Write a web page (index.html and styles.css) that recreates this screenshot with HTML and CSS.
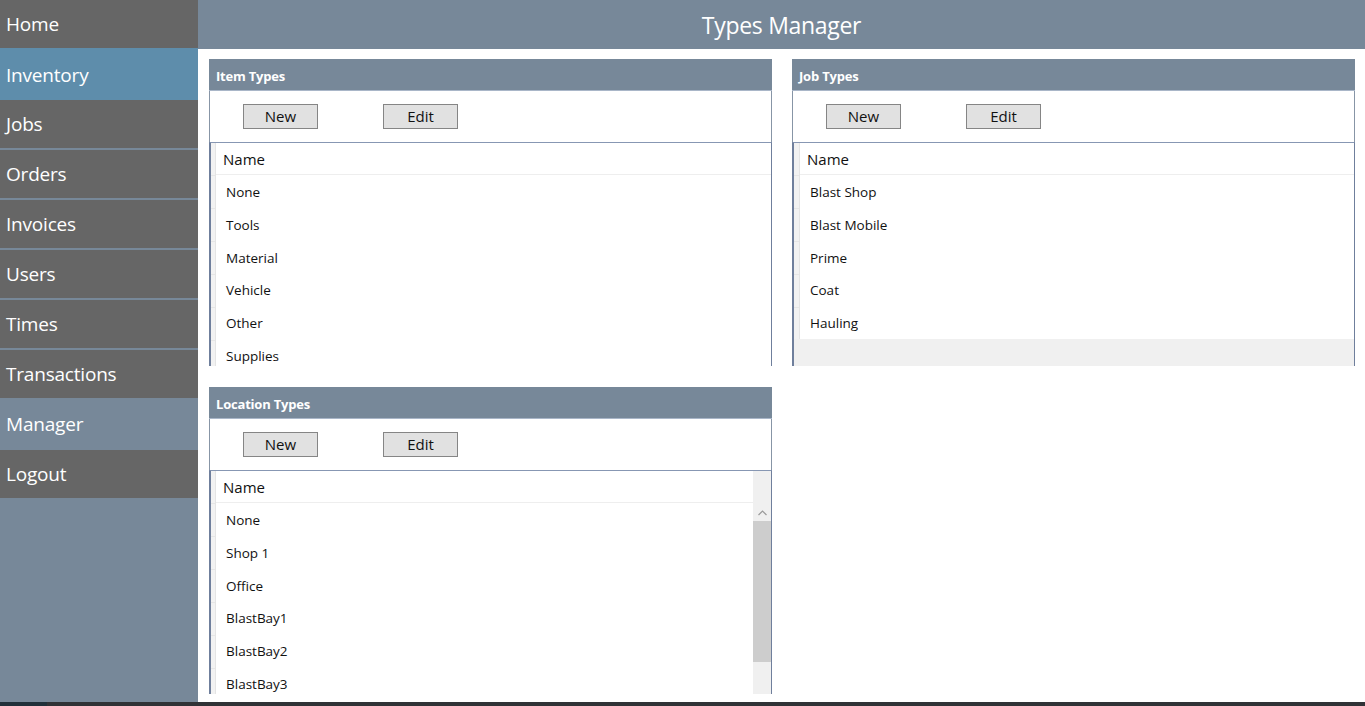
FILE: index.html
```html
<!DOCTYPE html>
<html>
<head>
<meta charset="utf-8">
<title>Types Manager</title>
<link rel="stylesheet" href="styles.css">
</head>
<body>
<div class="app">
  <nav class="sidebar">
    <div class="nav-item">Home</div>
    <div class="nav-item active">Inventory</div>
    <div class="nav-item">Jobs</div>
    <div class="nav-item">Orders</div>
    <div class="nav-item">Invoices</div>
    <div class="nav-item">Users</div>
    <div class="nav-item">Times</div>
    <div class="nav-item">Transactions</div>
    <div class="nav-item current">Manager</div>
    <div class="nav-item">Logout</div>
  </nav>
  <main class="main">
    <header class="title-bar">Types Manager</header>
    <div class="panels">
      <section class="panel">
        <div class="panel-head">Item Types</div>
        <div class="panel-tools">
          <button class="btn">New</button>
          <button class="btn">Edit</button>
        </div>
        <div class="grid">
          <div class="gutter"></div>
          <div class="grid-body">
            <div class="grid-header">Name</div>
            <div class="row">None</div>
            <div class="row">Tools</div>
            <div class="row">Material</div>
            <div class="row">Vehicle</div>
            <div class="row">Other</div>
            <div class="row">Supplies</div>
          </div>
        </div>
      </section>
      <section class="panel">
        <div class="panel-head">Job Types</div>
        <div class="panel-tools">
          <button class="btn">New</button>
          <button class="btn">Edit</button>
        </div>
        <div class="grid">
          <div class="grid-body with-empty">
            <div class="grid-rows">
              <div class="gutter"></div>
              <div class="grid-col">
                <div class="grid-header">Name</div>
                <div class="row">Blast Shop</div>
                <div class="row">Blast Mobile</div>
                <div class="row">Prime</div>
                <div class="row">Coat</div>
                <div class="row">Hauling</div>
              </div>
            </div>
            <div class="grid-empty"></div>
          </div>
        </div>
      </section>
      <section class="panel">
        <div class="panel-head">Location Types</div>
        <div class="panel-tools">
          <button class="btn">New</button>
          <button class="btn">Edit</button>
        </div>
        <div class="grid">
          <div class="gutter"></div>
          <div class="grid-body">
            <div class="grid-header">Name</div>
            <div class="row">None</div>
            <div class="row">Shop 1</div>
            <div class="row">Office</div>
            <div class="row">BlastBay1</div>
            <div class="row">BlastBay2</div>
            <div class="row">BlastBay3</div>
          </div>
          <div class="vscroll">
            <div class="vs-head"></div>
            <div class="vs-up"><svg width="9" height="6" viewBox="0 0 9 6"><polyline points="0.5,5 4.5,1 8.5,5" fill="none" stroke="#9a9a9a" stroke-width="1.2"/></svg></div>
            <div class="vs-thumb"></div>
            <div class="vs-track"></div>
          </div>
        </div>
      </section>
    </div>
  </main>
</div>
<div class="taskbar"><div class="tb-left"></div><div class="tb-rest"></div></div>
</body>
</html>
```

FILE: styles.css
```css
* { box-sizing: border-box; }
html, body { margin: 0; padding: 0; }
body {
  width: 1365px;
  height: 706px;
  overflow: hidden;
  background: #333;
  font-family: "Open Sans", "Noto Sans", "DejaVu Sans", sans-serif;
}
.app {
  display: flex;
  height: 702px;
}
.sidebar {
  width: 198px;
  flex: none;
  background: #778899;
  display: flex;
  flex-direction: column;
}
.nav-item {
  height: 50px;
  border-bottom: 2px solid #778899;
  background: #666666;
  color: #fff;
  font-size: 19px;
  line-height: 49px;
  padding-left: 6px;
  letter-spacing: -0.2px;
}
.nav-item.active {
  background: #5e8dab;
  border-bottom-color: #5e8dab;
  margin-top: -2px;
  height: 52px;
  line-height: 54px;
}
.nav-item.current {
  background: #778899;
}
.main {
  flex: 1;
  background: #fff;
  display: flex;
  flex-direction: column;
  min-width: 0;
}
.title-bar {
  height: 49px;
  background: #778899;
  color: #fff;
  font-size: 23px;
  text-align: center;
  line-height: 51px;
  letter-spacing: -0.3px;
}
.panels {
  display: grid;
  grid-template-columns: 563px 563px;
  grid-auto-rows: 307px;
  column-gap: 20px;
  row-gap: 21px;
  padding: 10px 10px 0 11px;
}
.panel {
  display: flex;
  flex-direction: column;
  min-height: 0;
}
.panel-head {
  height: 32px;
  flex: none;
  background: #778899;
  border-bottom: 1px solid #a9b6c8;
  color: #fff;
  font-weight: bold;
  font-size: 13px;
  line-height: 34px;
  padding-left: 7px;
  letter-spacing: -0.2px;
}
.panel-tools {
  height: 51px;
  flex: none;
  border-left: 1px solid #8795a6;
  border-right: 1px solid #8795a6;
  display: flex;
  align-items: center;
  padding-left: 33px;
  gap: 65px;
}
.btn {
  width: 75px;
  height: 25px;
  background: #e1e1e1;
  border: 1px solid #858585;
  font-family: inherit;
  font-size: 15px;
  color: #111;
  padding: 0;
  line-height: 23px;
}
.grid {
  flex: 1;
  min-height: 0;
  overflow: hidden;
  display: flex;
  border: 1px solid #6f7f9c;
  border-left-width: 2px;
  border-bottom: none;
  border-top-color: #8797b3;
  background: #fff;
}
.gutter {
  width: 5px;
  flex: none;
  background: repeating-linear-gradient(to bottom, #f2f2f2 0, #f2f2f2 32px, #e6e6e6 32px, #e6e6e6 33px);
  border-right: 1px solid #e4e4e4;
}
.grid-body {
  flex: 1;
  min-width: 0;
  display: flex;
  flex-direction: column;
}
.grid-header {
  height: 32px;
  flex: none;
  border-bottom: 1px solid #eeeeee;
  font-size: 15px;
  line-height: 32px;
  padding-left: 7px;
  color: #111;
}
.row {
  height: 32.8px;
  flex: none;
  font-size: 13.5px;
  line-height: 35px;
  padding-left: 10px;
  color: #111;
}
.grid-body.with-empty .grid-rows {
  display: flex;
  flex: none;
}
.grid-col { flex: 1; }
.grid-body.with-empty .gutter {
  width: 6px;
}
.grid-empty {
  flex: 1;
  background: #f0f0f0;
}
.vscroll {
  width: 18px;
  flex: none;
  display: flex;
  flex-direction: column;
  background: #f0f0f0;
}
.vs-head { height: 33px; flex: none; }
.vs-up {
  height: 17px;
  flex: none;
  display: flex;
  align-items: center;
  justify-content: center;
}
.vs-thumb {
  height: 141px;
  flex: none;
  background: #cdcdcd;
}
.vs-track { flex: 1; }
.taskbar {
  display: flex;
  height: 4px;
}
.tb-left { width: 47px; background: #21303a; }
.tb-rest { flex: 1; background: #303236; }
```
